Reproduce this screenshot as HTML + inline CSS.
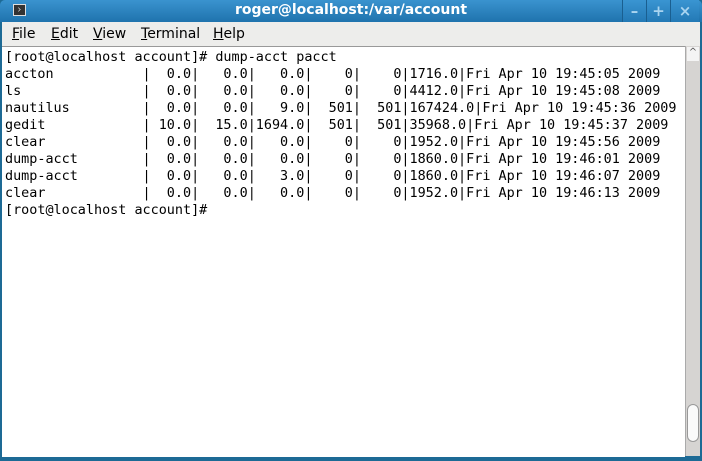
<!DOCTYPE html>
<html><head><style>
body{margin:0;width:702px;height:461px;overflow:hidden;background:#1d6a95;font-family:"DejaVu Sans","Liberation Sans",sans-serif;position:relative}
#title{position:absolute;left:0;top:0;width:702px;height:22px;background:linear-gradient(#3a93cf,#1f73ad);border-radius:5px 5px 0 0}
#title .t{position:absolute;left:0;width:702px;top:2px;text-align:center;color:#fff;font-weight:bold;font-size:14px}
.ic{position:absolute;left:13px;top:4px;width:13px;height:12px;background:#333;border:1px solid #ddd;box-sizing:border-box}
.ic:after{content:"";position:absolute;left:2px;top:2px;width:4px;height:4px;border-right:1px solid #eee;border-bottom:1px solid #eee;transform:rotate(-45deg) scale(.6)}
.btn{position:absolute;top:0;width:23px;height:22px;background:linear-gradient(#3a95d2,#2379b5);border-left:1px solid #1a5f90;color:#a9d4f0;font-weight:bold;font-size:15px;text-align:center;line-height:22px}
#menu{position:absolute;left:2px;top:22px;width:698px;height:24px;background:#ededeb;font-size:14px;color:#000}
#menu span{position:absolute;top:4px}
#term{position:absolute;left:2px;top:46px;width:683px;height:410px;background:#fff;border-top:1px solid #999}
pre{margin:0;position:absolute;left:3px;top:2px;font-family:"DejaVu Sans Mono","Liberation Mono",monospace;font-size:13.45px;line-height:17px;color:#000}
#sb{position:absolute;left:685px;top:46px;width:15px;height:410px;background:#d6d4d2;border-left:1px solid #aaa;box-sizing:border-box}
#thumb{position:absolute;left:1px;top:358px;width:12px;height:38px;background:#fafafa;border:1px solid #999;border-radius:6px;box-sizing:border-box}
</style></head><body>
<div id="title"><div class="ic"></div><div class="t">roger@localhost:/var/account</div>
<div class="btn" style="left:622px">–</div><div class="btn" style="left:646px">+</div><div class="btn" style="left:670px;width:28px">×</div></div>
<div id="menu"><span style="left:10px"><u>F</u>ile</span><span style="left:49px"><u>E</u>dit</span><span style="left:91px"><u>V</u>iew</span><span style="left:139px"><u>T</u>erminal</span><span style="left:211px"><u>H</u>elp</span></div>
<div id="term"><pre>[root@localhost account]# dump-acct pacct
accton           |  0.0|   0.0|   0.0|    0|    0|1716.0|Fri Apr 10 19:45:05 2009
ls               |  0.0|   0.0|   0.0|    0|    0|4412.0|Fri Apr 10 19:45:08 2009
nautilus         |  0.0|   0.0|   9.0|  501|  501|167424.0|Fri Apr 10 19:45:36 2009
gedit            | 10.0|  15.0|1694.0|  501|  501|35968.0|Fri Apr 10 19:45:37 2009
clear            |  0.0|   0.0|   0.0|    0|    0|1952.0|Fri Apr 10 19:45:56 2009
dump-acct        |  0.0|   0.0|   0.0|    0|    0|1860.0|Fri Apr 10 19:46:01 2009
dump-acct        |  0.0|   0.0|   3.0|    0|    0|1860.0|Fri Apr 10 19:46:07 2009
clear            |  0.0|   0.0|   0.0|    0|    0|1952.0|Fri Apr 10 19:46:13 2009
[root@localhost account]#</pre></div>
<div id="sb"><div style="position:absolute;top:1px;left:1px;width:12px;height:14px;background:#f4f4f4;font-size:10px;text-align:center;color:#555">^</div><div id="thumb"></div></div>
</body></html>
